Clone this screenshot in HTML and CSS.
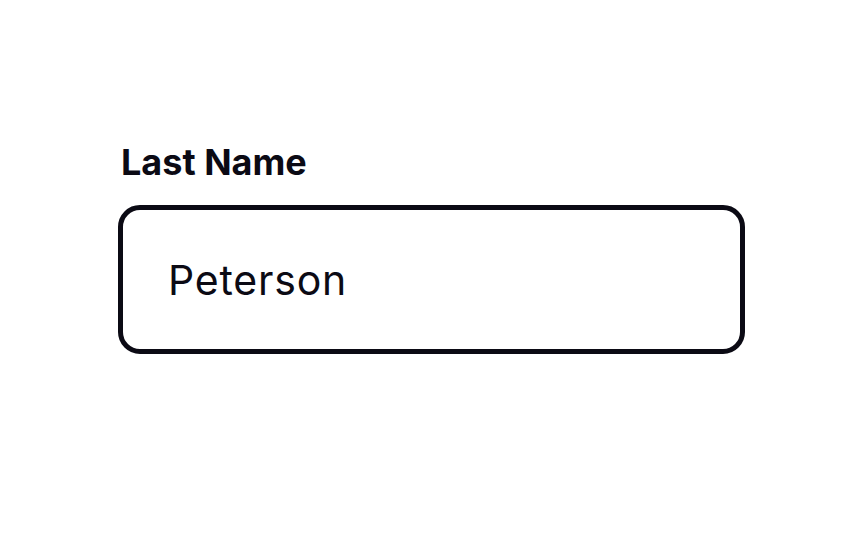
FILE: index.html
```html
<!DOCTYPE html>
<html>
<head>
<meta charset="utf-8">
<link rel="stylesheet" href="styles.css">
</head>
<body>
<div class="page">
  <div class="field">
    <label class="label" for="ln">Last Name</label>
    <div class="input" id="ln">Peterson</div>
  </div>
</div>
</body>
</html>
```
FILE: styles.css
```css
html, body {
  margin: 0;
  padding: 0;
  background: #ffffff;
}
.page {
  width: 864px;
  height: 540px;
  box-sizing: border-box;
  padding: 140px 0 0 118px;
  font-family: Inter, "Noto Sans", sans-serif;
  color: #0b0a14;
}
.field {
  display: flex;
  flex-direction: column;
  width: 627px;
}
.label {
  font-weight: 700;
  font-size: 36px;
  line-height: 44px;
  letter-spacing: 0;
  padding-left: 3px;
  margin-bottom: 21px;
}
.input {
  box-sizing: border-box;
  height: 149px;
  border: 5px solid #0b0a14;
  border-radius: 22px;
  display: flex;
  align-items: center;
  padding-left: 45px;
  font-size: 41px;
  letter-spacing: 0.8px;
  font-weight: 400;
}
```
